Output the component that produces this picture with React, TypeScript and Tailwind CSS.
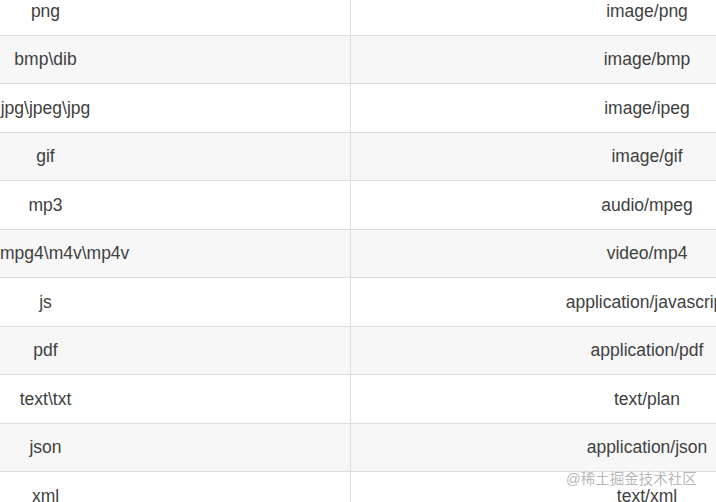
const rows: [string, string][] = [
  ["png", "image/png"],
  ["bmp\\dib", "image/bmp"],
  ["jpg\\jpeg\\jpg", "image/ipeg"],
  ["gif", "image/gif"],
  ["mp3", "audio/mpeg"],
  ["mpg4\\m4v\\mp4v", "video/mp4"],
  ["js", "application/javascript"],
  ["pdf", "application/pdf"],
  ["text\\txt", "text/plan"],
  ["json", "application/json"],
  ["xml", "text/xml"],
]

export default function App() {
  return (
    <div
      className="relative w-[716px] h-[502px] overflow-hidden bg-white text-[17.5px] text-[#404040]"
      style={{ fontFamily: '"Liberation Sans", Arial, sans-serif' }}
    >
      <div className="-mt-[13px]">
        {rows.map(([ext, mime], i) => (
          <div
            key={ext}
            className={`flex h-[48.5px] border-b border-[#dcdcdc] ${i % 2 === 1 ? "bg-[#f7f7f7]" : "bg-white"}`}
          >
            <div className="w-[351px] shrink-0 flex items-center border-r border-[#dcdcdc]">
              <div className="w-[91px] text-center whitespace-nowrap">{ext}</div>
            </div>
            <div className="flex-1 flex items-center pl-[214px]">
              <div className="w-[164px] shrink-0 text-center whitespace-nowrap">{mime}</div>
            </div>
          </div>
        ))}
      </div>
      <div
        className="absolute left-[566px] top-[469px] text-[14.5px] text-[#b8b8b8] whitespace-nowrap"
        style={{ fontFamily: '"Liberation Sans", "Noto Sans CJK SC", sans-serif' }}
      >
        @稀土掘金技术社区
      </div>
    </div>
  )
}
